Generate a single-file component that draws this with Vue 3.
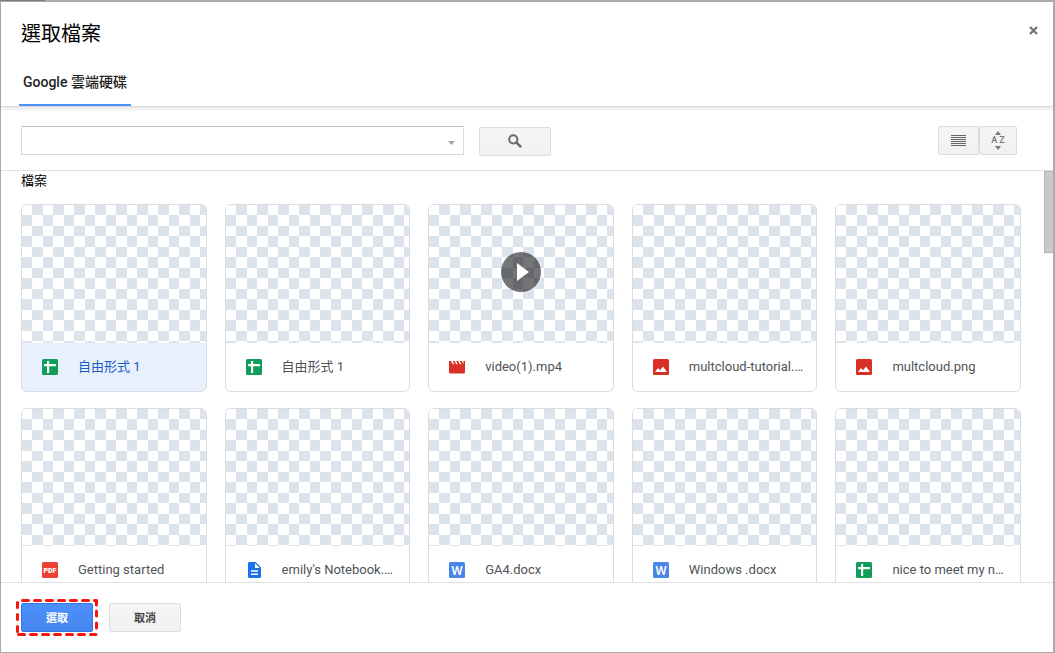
<template>
    <div class="page">
        <main class="picker" role="dialog" aria-labelledby="picker-title">
            <header class="picker-header">
                <div class="title-row">
                    <h1 id="picker-title">選取檔案</h1>
                    <button type="button" class="close-btn" aria-label="關閉">
                        <svg width="9" height="9" viewBox="0 0 9 9">
                            <path d="M1 1l7 7M8 1L1 8" fill="none" stroke="#777" stroke-width="2.4" />
                        </svg>
                    </button>
                </div>
                <nav class="tabs">
                    <a href="#drive" class="tab">Google 雲端硬碟</a>
                </nav>
            </header>

            <form class="toolbar" @submit.prevent>
                <div class="search-box">
                    <input v-model="query" type="text" aria-label="搜尋">
                    <button type="button" class="arrow-btn" aria-label="搜尋選項">
                        <svg width="7" height="4" viewBox="0 0 7 4">
                            <path d="M0 0h7L3.5 4z" fill="#a3a3a3" />
                        </svg>
                    </button>
                </div>
                <button type="submit" class="btn search-btn" aria-label="搜尋">
                    <svg width="14" height="14" viewBox="0 0 14 14" fill="none" stroke="#6b6b6b">
                        <circle cx="5.3" cy="5.3" r="4.1" stroke-width="2" />
                        <path d="M8.3 8.3l4.8 4.8" stroke-width="2.6" />
                    </svg>
                </button>
                <div class="view-btns">
                    <button type="button" class="btn list-btn" aria-label="清單檢視">
                        <svg width="15" height="11" viewBox="0 0 15 11" shape-rendering="crispEdges">
                            <path d="M0 .5h15M0 2.5h15M0 4.5h15M0 6.5h15M0 8.5h15M0 10.5h15" stroke="#666" />
                        </svg>
                    </button>
                    <button type="button" class="btn sort-btn" aria-label="排序">
                        <svg width="6" height="4" viewBox="0 0 6 4">
                            <path d="M0 4h6L3 0z" fill="#777" />
                        </svg>
                        <span class="letters"><span>A</span><span>Z</span></span>
                        <svg width="6" height="4" viewBox="0 0 6 4">
                            <path d="M0 0h6L3 4z" fill="#777" />
                        </svg>
                    </button>
                </div>
            </form>

            <section class="files">
                <h2>檔案</h2>
                <ul class="grid">
                    <li v-for="file in files" :key="file.id">
                        <button type="button" class="card" :class="{ selected: file.id === selectedId }"
                            @click="selectedId = file.id">
                            <span class="thumb">
                                <svg v-if="file.type === 'video'" width="40" height="40" viewBox="0 0 40 40">
                                    <circle cx="20" cy="20" r="20" fill="#000" fill-opacity=".54" />
                                    <path d="M16 11v18l12-9z" fill="#fff" />
                                </svg>
                            </span>
                            <span class="info">
                                <svg width="16" height="16" viewBox="0 0 16 16">
                                    <template v-if="file.type === 'sheet'">
                                        <rect width="16" height="16" rx="1.5" fill="#0f9d58" />
                                        <path d="M2 5h12v2.2H7.2V14H5V7.2H2zM5 2h2.2v4H5z" fill="#fff" />
                                    </template>
                                    <template v-else-if="file.type === 'video'">
                                        <path d="M0 2h2l1.6 3.2h1.6L3.6 2h2l1.6 3.2h1.6L7.2 2h2l1.6 3.2h1.6L10.800 2h2l1.600 3.200V2H16v11a1.5 1.5 0 0 1-1.5 1.5h-13A1.5 1.5 0 0 1 0 13z"
                                            fill="#d93025" />
                                    </template>
                                    <template v-else-if="file.type === 'image'">
                                        <rect width="16" height="16" rx="1.5" fill="#d93025" />
                                        <path d="M2 13l3-4 2 2.2L10 7.5l4 5.5z" fill="#fff" />
                                    </template>
                                    <template v-else-if="file.type === 'pdf'">
                                        <rect width="16" height="16" rx="1.5" fill="#ea4335" />
                                        <text x="8" y="10.5" class="pdf-mark">PDF</text>
                                    </template>
                                    <template v-else-if="file.type === 'doc'">
                                        <path d="M3 0h6.5L15 5.3v9.2a1.5 1.5 0 0 1-1.5 1.5h-10A1.5 1.5 0 0 1 2 14.5v-13A1.5 1.5 0 0 1 3 0z"
                                            fill="#1a73e8" />
                                        <path d="M9 1.2V6h4.8zM5 8.2h7v1.5H5zM5 11.4h7v1.5H5z" fill="#fff" />
                                    </template>
                                    <template v-else>
                                        <rect width="16" height="16" rx="1.5" fill="#4a86e8" />
                                        <text x="8" y="12.5" class="word-mark">W</text>
                                    </template>
                                </svg>
                                <span class="name">{{ file.name }}</span>
                            </span>
                        </button>
                    </li>
                </ul>
                <div class="scroll-thumb"></div>
            </section>

            <footer class="actions">
                <div class="primary-wrap">
                    <button type="button" class="btn primary">選取</button>
                    <svg class="marker" width="82" height="37" viewBox="0 0 82 37" fill="none" stroke="#f5160d"
                        stroke-width="3" stroke-linecap="round">
                        <path d="M6.5 1.5H80" stroke-dasharray="6 6" />
                        <path d="M2.5 35.5H80" stroke-dasharray="6 6" />
                        <path d="M1.5 3.5V34" stroke-dasharray="5 7" />
                        <path d="M80.5 1.5V6M80.5 12v5M80.5 24v5" />
                    </svg>
                </div>
                <button type="button" class="btn">取消</button>
            </footer>
        </main>
    </div>
</template>

<script setup>
import { ref } from 'vue'

const query = ref('')
const selectedId = ref(1)

const files = [
    { id: 1, type: 'sheet', name: '自由形式 1' },
    { id: 2, type: 'sheet', name: '自由形式 1' },
    { id: 3, type: 'video', name: 'video(1).mp4' },
    { id: 4, type: 'image', name: 'multcloud-tutorial.…' },
    { id: 5, type: 'image', name: 'multcloud.png' },
    { id: 6, type: 'pdf', name: 'Getting started' },
    { id: 7, type: 'doc', name: "emily's Notebook.…" },
    { id: 8, type: 'word', name: 'GA4.docx' },
    { id: 9, type: 'word', name: 'Windows .docx' },
    { id: 10, type: 'sheet', name: 'nice to meet my n…' }
]
</script>

<style>
body {
    margin: 0;
}
</style>

<style scoped>
* {
    box-sizing: border-box;
}

.page {
    height: 100vh;
    padding: 2px 2px 1px 1px;
    background: linear-gradient(#7d7d7d, #7d7d7d) 0 0 / 45px 1px no-repeat #ababab;
    font-family: Roboto, "Noto Sans CJK TC", sans-serif;
    color: #000;
}

.picker {
    display: flex;
    flex-direction: column;
    height: 100%;
    background: #fff;
}

button {
    font-family: inherit;
    cursor: pointer;
}

svg {
    display: block;
    flex: none;
}

.picker-header {
    position: relative;
    z-index: 1;
    border-bottom: 1px solid #dcdcdc;
    box-shadow: 0 2px 4px rgba(0, 0, 0, 0.1);
}

.title-row {
    display: flex;
    justify-content: space-between;
    align-items: flex-start;
    height: 56px;
    padding: 18px 11px 0 20px;
}

h1 {
    margin: 0;
    font-size: 20px;
    line-height: 28px;
    font-weight: 400;
}

.close-btn {
    display: flex;
    padding: 6px 4px;
    border: 0;
    background: none;
}

.tabs {
    display: flex;
    padding: 0 18px;
}

.tab {
    height: 48px;
    padding: 0 4px;
    border-bottom: 2px solid #4d90fe;
    font-size: 14px;
    line-height: 48px;
    font-weight: 500;
    color: #222;
    text-decoration: none;
}

.toolbar {
    display: flex;
    align-items: flex-start;
    height: 64px;
    padding: 19px 36px 0 20px;
    border-bottom: 1px solid #e0e0e0;
}

.search-box {
    display: flex;
    flex: 0 1 443px;
    height: 29px;
    margin-right: 15px;
    border: 1px solid #d9d9d9;
    border-top-color: #c0c0c0;
}

.search-box input {
    flex: 1;
    min-width: 0;
    padding: 0 8px;
    border: 0;
    outline: 0;
    font: 13px Roboto, "Noto Sans CJK TC", sans-serif;
}

.arrow-btn {
    display: flex;
    align-items: center;
    padding: 4px 8px 0;
    border: 0;
    background: none;
}

.btn {
    display: flex;
    align-items: center;
    justify-content: center;
    width: 72px;
    height: 29px;
    padding: 0 0 2px;
    border: 1px solid #dcdcdc;
    border-radius: 2px;
    background: linear-gradient(#f5f5f5, #f1f1f1);
    font-size: 11px;
    font-weight: 700;
    color: #444;
}

.search-btn {
    margin-top: 1px;
}

.view-btns {
    display: flex;
    margin-left: auto;
}

.list-btn {
    width: 41px;
    padding: 0;
}

.sort-btn {
    flex-direction: column;
    gap: 1px;
    width: 38px;
    padding: 0;
}

.letters {
    display: flex;
    gap: 2px;
    font-size: 9px;
    line-height: 9px;
    font-weight: 500;
    color: #777;
}

.files {
    position: relative;
    flex: 1;
    min-height: 0;
    padding: 0 32px 0 20px;
    overflow: hidden;
}

h2 {
    margin: 0;
    padding-bottom: 13px;
    font-size: 13px;
    line-height: 20px;
    font-weight: 400;
}

.grid {
    display: grid;
    grid-template-columns: repeat(5, minmax(0, 1fr));
    gap: 16px 18px;
    margin: 0;
    padding: 0;
    list-style: none;
}

.card {
    display: block;
    width: 100%;
    padding: 0;
    border: 1px solid #dadce0;
    border-radius: 6px;
    background: #fff;
    overflow: hidden;
    text-align: left;
    color: #505357;
}

.card.selected {
    background: #e8f0fe;
    color: #1a5bc4;
}

/* checkerboard shown while a preview is missing */
.thumb {
    display: flex;
    align-items: center;
    justify-content: center;
    aspect-ratio: 4 / 3;
    padding-bottom: 4px;
    background-color: #fff;
    background-image: conic-gradient(from 0deg at 10px 10px, #dce3eb 25%, #fff 0 50%, #dce3eb 0 75%, #fff 0);
    background-size: 21px 21px;
}

.info {
    display: flex;
    align-items: center;
    gap: 20px;
    height: 48px;
    padding: 0 10px 0 20px;
}

.name {
    overflow: hidden;
    white-space: nowrap;
    text-overflow: ellipsis;
    font-size: 13px;
    line-height: 20px;
}

.pdf-mark,
.word-mark {
    font: 900 7px Roboto, sans-serif;
    fill: #fff;
    text-anchor: middle;
}

.word-mark {
    font-size: 13px;
    font-weight: 500;
}

.scroll-thumb {
    position: absolute;
    top: 0;
    right: 0;
    width: 9px;
    height: 82px;
    border: 1px solid #b4b4b4;
    border-right: 0;
    background: #c9c9c9;
}

.actions {
    display: flex;
    gap: 16px;
    height: 70px;
    padding: 20px;
    border-top: 1px solid #e0e0e0;
}

.primary-wrap {
    position: relative;
}

.primary {
    border-color: #3079ed;
    background: linear-gradient(#4d90fe, #4787ed);
    color: #fff;
}

.marker {
    position: absolute;
    top: -4px;
    left: -5px;
    pointer-events: none;
}
</style>
